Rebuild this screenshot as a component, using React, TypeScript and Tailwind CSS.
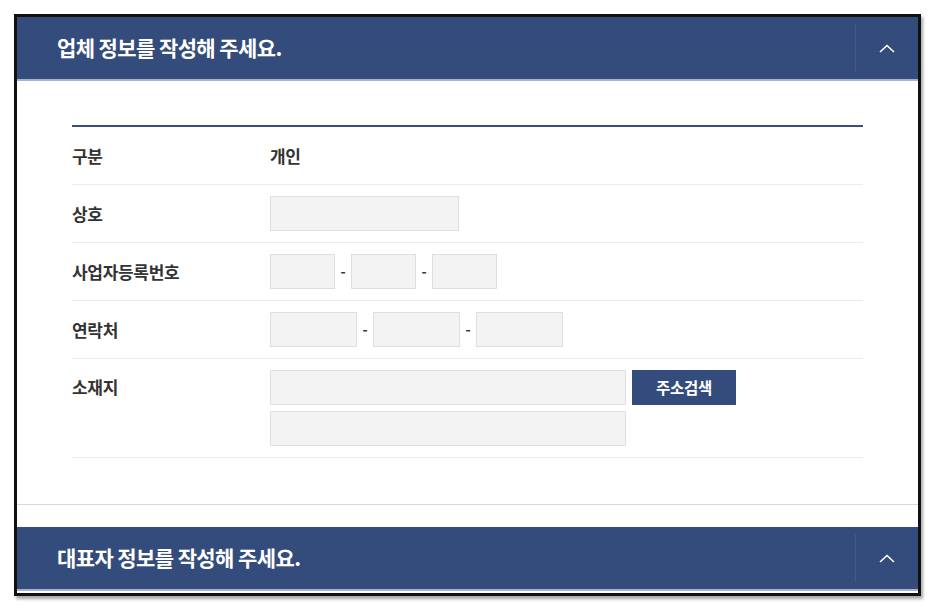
const font = { fontFamily: '"Noto Sans CJK KR", "Noto Sans", sans-serif' };

function Header({ title }: { title: string }) {
  return (
    <div className="flex h-[64px] items-stretch bg-[#344c7b] border-b-2 border-[#a7b3ca]">
      <div className="flex flex-1 items-center pl-[40px] text-[21px] font-bold tracking-[-0.6px] text-white">
        {title}
      </div>
      <div className="my-[7px] w-px bg-[#42598a]" />
      <div className="flex w-[62px] items-center justify-center">
        <svg width="16" height="9" viewBox="0 0 16 9" fill="none">
          <path d="M1 8 L8 1.5 L15 8" stroke="#ffffff" strokeWidth="1.6" />
        </svg>
      </div>
    </div>
  );
}

function Input({ w }: { w: string }) {
  return <div className={`${w} h-[35px] border border-[#dedede] bg-[#f3f3f3]`} />;
}

function Dash() {
  return <span className="w-4 text-center text-[14px] font-bold text-[#333]">-</span>;
}

function Row({ label, children, tall }: { label: string; children: React.ReactNode; tall?: boolean }) {
  return (
    <div className={`flex border-b border-[#ececec] ${tall ? "py-[11px]" : "h-[58px] items-center"}`}>
      <div className={`w-[198px] text-[17px] font-bold tracking-[-0.3px] text-[#333] ${tall ? "pt-[4px]" : ""}`}>
        {label}
      </div>
      <div className="flex-1">{children}</div>
    </div>
  );
}

export default function App() {
  return (
    <div className="min-h-[611px] bg-white pl-[14px] pt-[14px]" style={font}>
      <div className="w-[907px] border-[3px] border-[#111] bg-white shadow-[2px_3px_3px_rgba(0,0,0,0.35)]">
        <Header title="업체 정보를 작성해 주세요." />

        <div className="px-[55px] pt-[44px] pb-[46px]">
          <div className="border-t-2 border-[#3b4f78]">
            <Row label="구분">
              <span className="text-[17px] font-bold tracking-[-0.3px] text-[#333]">개인</span>
            </Row>
            <Row label="상호">
              <Input w="w-[189px]" />
            </Row>
            <Row label="사업자등록번호">
              <div className="flex items-center">
                <Input w="w-[65px]" />
                <Dash />
                <Input w="w-[65px]" />
                <Dash />
                <Input w="w-[65px]" />
              </div>
            </Row>
            <Row label="연락처">
              <div className="flex items-center">
                <Input w="w-[87px]" />
                <Dash />
                <Input w="w-[87px]" />
                <Dash />
                <Input w="w-[87px]" />
              </div>
            </Row>
            <Row label="소재지" tall>
              <div className="flex flex-col gap-[6px]">
                <div className="flex gap-[6px]">
                  <Input w="w-[356px]" />
                  <button className="flex h-[35px] w-[104px] items-center justify-center bg-[#344c7b] text-[15.5px] font-bold tracking-[-0.3px] text-white">
                    주소검색
                  </button>
                </div>
                <Input w="w-[356px]" />
              </div>
            </Row>
          </div>
        </div>

        <div className="h-[23px] border-t border-[#d9d9d9] bg-white" />
        <Header title="대표자 정보를 작성해 주세요." />
        <div className="h-[2px] bg-white" />
      </div>
    </div>
  );
}
